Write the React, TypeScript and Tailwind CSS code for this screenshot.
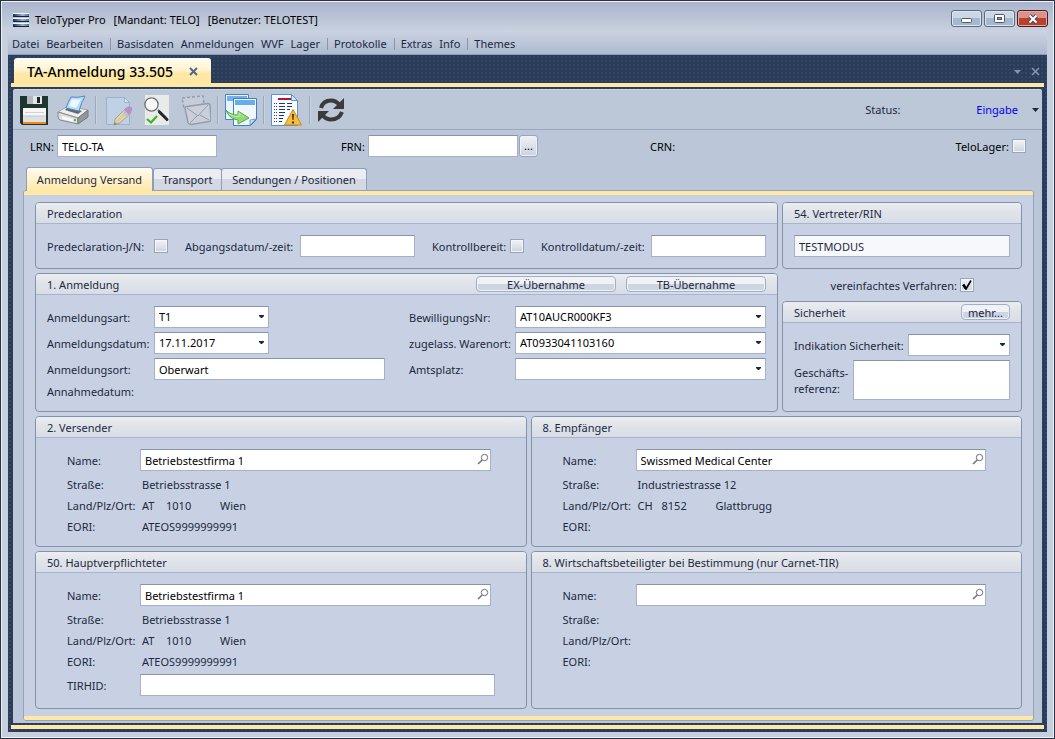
import type { ReactNode } from "react";
import clsx from "clsx";

type Party = {
  title: string;
  id: string;
  name: string;
  street?: string;
  country?: string;
  zip?: string;
  city?: string;
  eori?: string;
  tirhid?: boolean;
};

const parties: Party[] = [
  {
    title: "2. Versender",
    id: "versender",
    name: "Betriebstestfirma 1",
    street: "Betriebsstrasse 1",
    country: "AT",
    zip: "1010",
    city: "Wien",
    eori: "ATEOS9999999991",
  },
  {
    title: "8. Empfänger",
    id: "empfaenger",
    name: "Swissmed Medical Center",
    street: "Industriestrasse 12",
    country: "CH",
    zip: "8152",
    city: "Glattbrugg",
  },
  {
    title: "50. Hauptverpflichteter",
    id: "hauptverpflichteter",
    name: "Betriebstestfirma 1",
    street: "Betriebsstrasse 1",
    country: "AT",
    zip: "1010",
    city: "Wien",
    eori: "ATEOS9999999991",
    tirhid: true,
  },
  {
    title: "8. Wirtschaftsbeteiligter bei Bestimmung (nur Carnet-TIR)",
    id: "wirtschaftsbeteiligter",
    name: "",
  },
];

const menu = [
  ["Datei", "Bearbeiten"],
  ["Basisdaten", "Anmeldungen", "WVF", "Lager"],
  ["Protokolle"],
  ["Extras", "Info"],
  ["Themes"],
];

const field =
  "h-[22px] min-w-0 rounded-none border border-[#a5b1c8] border-t-[#8593ab] bg-white px-1 text-black outline-none focus:border-[#e5c365]";

function TextInput({ id, value = "", className }: { id: string; value?: string; className?: string }) {
  return <input id={id} type="text" defaultValue={value} className={clsx(field, className)} />;
}

function Arrow({ className }: { className?: string }) {
  return (
    <svg viewBox="0 0 7 4" className={clsx("h-1 w-[7px]", className)} fill="currentColor">
      <path d="M0 0h7L3.5 4z" />
    </svg>
  );
}

function Combo({ id, value = "", className }: { id: string; value?: string; className?: string }) {
  return (
    <div className={clsx("relative flex", className)}>
      <select id={id} defaultValue={value} className={clsx(field, "w-full appearance-none")}>
        <option value={value}>{value}</option>
      </select>
      <svg
        viewBox="0 0 5 3"
        className="pointer-events-none absolute top-[9px] right-[5px] h-[3px] w-[5px]"
        fill="#1b293e"
      >
        <path d="M0 0h5v1L3 3H2L0 1z" />
      </svg>
    </div>
  );
}

function Check({ id, checked = false }: { id: string; checked?: boolean }) {
  return (
    <span className="relative flex size-3.5 shrink-0">
      <input
        id={id}
        type="checkbox"
        defaultChecked={checked}
        className="peer size-3.5 appearance-none border border-[#97a5bf] bg-linear-to-b from-[#f3f4f7] to-[#cdd2df] shadow-[inset_0_0_0_1px_#f4f6fa]"
      />
      <svg
        viewBox="0 0 14 14"
        className="pointer-events-none absolute inset-0 hidden peer-checked:block"
        fill="none"
        stroke="#000"
      >
        <path d="M3 7l3 4L11 2.500" strokeWidth="1.600" />
        <path d="M3.200 6.600l2.600 3.600" strokeWidth="2.600" />
      </svg>
    </span>
  );
}

function Label({ htmlFor, className, children }: { htmlFor: string; className?: string; children: ReactNode }) {
  return (
    <label htmlFor={htmlFor} className={clsx("shrink-0 pt-0.5 whitespace-nowrap", className)}>
      {children}
    </label>
  );
}

function SmallButton({ className, children }: { className?: string; children: ReactNode }) {
  return (
    <button
      type="button"
      className={clsx(
        "flex h-4 items-center justify-center rounded-sm border border-[#a3afc8] bg-linear-to-b from-[#f0f2f6] from-50% to-[#cfd4e1] to-50% pt-px shadow-[inset_0_0_0_1px_#eef1f6]",
        className,
      )}
    >
      {children}
    </button>
  );
}

function Group({
  title,
  actions,
  className,
  children,
}: {
  title: string;
  actions?: ReactNode;
  className?: string;
  children: ReactNode;
}) {
  return (
    <section className={clsx("rounded border border-[#8492a8]", className)}>
      <header className="flex h-[21px] items-center justify-between rounded-t-[3px] border-b border-[#a7b4cb] bg-linear-to-b from-[#eaeef0] via-[#dfe3e9] to-[#d8dce6] px-[11px]">
        <h2 className="pt-0.5">{title}</h2>
        {actions}
      </header>
      {children}
    </section>
  );
}

function PartyGroup({ party }: { party: Party }) {
  const { title, id, name, street, country, zip, city, eori, tirhid } = party;
  return (
    <Group title={title}>
      <div className="pt-[11px] pr-[35px] pb-[9px] pl-[31px]">
        <div className="mb-[3px] flex items-center">
          <Label htmlFor={`${id}-name`} className="w-[73px]">
            Name:
          </Label>
          <div className="relative flex flex-1">
            <TextInput id={`${id}-name`} value={name} className="w-full pr-5" />
            <button type="button" aria-label="Suchen" className="absolute top-1 right-[2px]">
              <svg viewBox="0 0 12 12" className="size-3" fill="none" stroke="#6b7078">
                <circle cx="7.500" cy="4.500" r="3.200" />
                <path d="M5.200 7L1 11" strokeWidth="1.500" />
              </svg>
            </button>
          </div>
        </div>
        <dl className="grid grid-cols-[75px_1fr] leading-[21px] whitespace-nowrap">
          <dt>Straße:</dt>
          <dd>{street}</dd>
          <dt>Land/Plz/Ort:</dt>
          <dd className="flex">
            <span className="w-6">{country}</span>
            <span className="w-[54px]">{zip}</span>
            <span>{city}</span>
          </dd>
          <dt>EORI:</dt>
          <dd>{eori}</dd>
        </dl>
        {tirhid && (
          <div className="-mr-1 mt-0.5 mb-[3px] flex items-center">
            <Label htmlFor={`${id}-tirhid`} className="w-[73px]">
              TIRHID:
            </Label>
            <TextInput id={`${id}-tirhid`} className="flex-1" />
          </div>
        )}
      </div>
    </Group>
  );
}

function SaveIcon() {
  return (
    <svg viewBox="0 0 32 32" className="size-8">
      <path d="M1 2h28v29H3l-2-2z" fill="#203431" />
      <path d="M8 2h15v8H8z" fill="#e4e5e7" />
      <path d="M8 2h6v8H8z" fill="#b5b9bd" />
      <path d="M18 3h3v6h-3z" fill="#1b2426" />
      <path d="M4 14h23v14H4z" fill="#f6f6f6" />
      <path d="M4 21h23v7H4z" fill="#dedfe1" />
      <path d="M6 18.500h19M6 22.500h19" stroke="#cfd1d3" />
      <path d="M4 28h23v2H4z" fill="#f08a1d" />
    </svg>
  );
}

function PrintIcon() {
  return (
    <svg viewBox="0 0 32 32" className="size-8" strokeLinejoin="round">
      <path d="M1 18l10-6 20 4-10 8z" fill="#eeeeee" stroke="#a2a7a9" />
      <path d="M1 18l20 6v6L3 26q-2-1-2-3z" fill="#dcdddd" stroke="#85898b" />
      <path d="M21 24l10-8v7l-10 7z" fill="#94989a" stroke="#74797b" />
      <path d="M8 16l13 4 4-3-14-4z" fill="#64696c" />
      <path d="M14 3q7 1 14-1-4 7-6 15L9 14q2-6 5-11z" fill="#b9dcf7" stroke="#4f8cc4" />
      <path d="M15 5q5 1 9 0l-5 9-7-2z" fill="#edf7ff" />
      <path d="M5 22l11 3v3L5 25z" fill="#f9f9f9" />
      <path d="M17 25h2v2h-2z" fill="#4fc224" />
    </svg>
  );
}

function EditIcon() {
  return (
    <svg viewBox="0 0 32 32" className="size-8 opacity-60">
      <path d="M3.500 3.500h18l5 5v22h-23z" fill="#c4d8f0" stroke="#83a6d0" />
      <path d="M21.500 3.500v5h5z" fill="#edf4fb" stroke="#83a6d0" />
      <path d="M11 31l1-6 11-11 5 5-11 10z" fill="#edd579" stroke="#a88e50" />
      <path d="M13 26L24 15M16 28l10-10" stroke="#f9edbd" />
      <path d="M21 16l3-3q3-2 5 1 1 2-1 4l-2 3z" fill="#b06fc0" />
      <path d="M19 18l2-2 5 5-2 2z" fill="#b9bfca" />
      <path d="M11 31l.500-3 2.500 2z" fill="#555" />
    </svg>
  );
}

function CheckDocIcon() {
  return (
    <svg viewBox="0 0 32 32" className="size-8" fill="none">
      <path d="M4 1h24v30H4z" fill="#e9ebea" />
      <path d="M17 16l8 8" stroke="#4a4e50" strokeWidth="2" />
      <path d="M18.500 18l7.500 7.500" stroke="#25292b" strokeWidth="3" strokeLinecap="round" />
      <circle cx="10.500" cy="10.500" r="6.600" fill="#f6f8f8" stroke="#6c7072" strokeWidth="1.300" />
      <path d="M6 9q2-4 6-3" stroke="#fff" strokeWidth="2" />
      <path d="M6 25l4 3.500 6-6.500" stroke="#3cb51b" strokeWidth="2.200" />
    </svg>
  );
}

function MailIcon() {
  return (
    <svg viewBox="0 0 32 32" className="size-8" fill="none" stroke="#949dab">
      <path d="M3 4l21-2 1 8-15 3-5 1z" fill="#c6cdd8" strokeWidth="1.500" strokeDasharray="3 2" />
      <path
        d="M8 12.500l21-3q2 0 2 2l1 14q0 2-2 2l-18 3q-2 0-3-2L6 14.500q0-2 2-2z"
        fill="#c9d0da"
        strokeWidth="1.500"
      />
      <path d="M8 14l11 8 10-11M11 29l7-7M30 26l-9-5" />
    </svg>
  );
}

function WindowsIcon() {
  return (
    <svg viewBox="0 0 32 32" className="size-8">
      <path d="M.500.500h23v25H.500z" fill="#e9f4ff" stroke="#4383c6" />
      <path d="M2 2h20v5H2z" fill="#72b2ec" />
      <path d="M8.500 4.500h23v21l-6 6h-17z" fill="#f1f7ff" stroke="#3f7ec1" />
      <path d="M10 6h20v5H10z" fill="#69acec" />
      <path d="M25 31v-5l6-1z" fill="#cfe2f5" stroke="#3f7ec1" strokeWidth=".7" />
      <path
        d="M1 16q4 5 12 5v-4l11 7-11 6v-4Q4 25 1 16z"
        fill="#93d873"
        stroke="#55ad4c"
        strokeLinejoin="round"
      />
      <path d="M4 20q4 3 10 2.500V19l5 4" fill="none" stroke="#c6efae" />
    </svg>
  );
}

function ReportIcon() {
  return (
    <svg viewBox="0 0 32 32" className="size-8">
      <path d="M.500.500h20l6 6v25H.500z" fill="#f8fbff" stroke="#5b93cd" />
      <path d="M20.500.500v6h6z" fill="#d8e7f7" stroke="#5b93cd" />
      <path d="M7 4h13v2H7z" fill="#b8132b" />
      <path d="M3 9.500h3M3 12.500h3M3 15.500h3M3 18.500h3M3 21.500h3M3 24.500h3M3 27.500h3" stroke="#263f82" strokeDasharray="1 1" />
      <path d="M8 9.500h6M16 9.500h5M8 12.500h6M16 12.500h5M8 15.500h6M16 15.500h3M8 18.500h6M8 21.500h5M8 24.500h4M8 27.500h3" stroke="#20366f" />
      <path d="M22 15.500L30.500 31h-17z" fill="#f5bd3a" stroke="#c98b1c" strokeLinejoin="round" />
      <path d="M21 20h2l-.5 6h-1zM21 27.500h2v2h-2z" fill="#4c2b10" />
    </svg>
  );
}

function RefreshIcon() {
  return (
    <svg viewBox="0 0 32 32" className="size-8" fill="none" stroke="#3b3b3b" strokeWidth="4">
      <path d="M4 14Q6 6.500 14 6.500q5 0 8.500 4.500" />
      <path d="M25 18q-3 7.500-11 7.500-5 0-8.500-4.500" />
      <path d="M27 4v11H16z" fill="#3b3b3b" stroke="none" />
      <path d="M1 28V17h11z" fill="#3b3b3b" stroke="none" />
    </svg>
  );
}

const tools = [
  [
    { label: "Speichern", icon: <SaveIcon /> },
    { label: "Drucken", icon: <PrintIcon /> },
  ],
  [
    { label: "Bearbeiten", icon: <EditIcon /> },
    { label: "Prüfen", icon: <CheckDocIcon /> },
    { label: "Senden", icon: <MailIcon /> },
  ],
  [{ label: "Kopieren", icon: <WindowsIcon /> }],
  [{ label: "Fehlerbericht", icon: <ReportIcon /> }],
  [{ label: "Aktualisieren", icon: <RefreshIcon /> }],
];

function TitleBar() {
  const button =
    "flex h-[17px] w-[31px] items-center justify-center rounded-[3px] border border-[#5c6a80] bg-linear-to-b from-[#c9d7e6] from-50% to-[#a5b8cf] to-50% shadow-[inset_0_0_0_1px_#dce6f0]";
  return (
    <div className="flex h-[29px] items-start justify-between bg-linear-to-b from-[#aab5cd] to-[#c9d1de] pr-[5px] pl-[11px]">
      <div className="flex items-center gap-1.5 pt-[9px]">
        <svg viewBox="0 0 16 14" className="h-3.5 w-4">
          <defs>
            <linearGradient id="stripe" gradientUnits="userSpaceOnUse" x1="0" y1="0" x2="16" y2="0">
              <stop offset="0" stopColor="#10315f" />
              <stop offset=".6" stopColor="#9fb4d0" />
              <stop offset="1" stopColor="#5b7090" />
            </linearGradient>
          </defs>
          <path d="M0 0h16v3H0zM0 5h16v4H0zM0 10h16v4H0z" fill="#f2f6fa" />
          <path d="M0 1h16v2H0zM0 6h16v2H0zM0 11h16v2H0z" fill="url(#stripe)" />
          <path d="M0 3h16v1H0zM0 8h16v1H0zM0 13h16v1H0z" fill="#12233f" />
        </svg>
        <h1 className="flex gap-2 pt-px text-black">
          <span>TeloTyper Pro</span>
          <span>[Mandant: TELO]</span>
          <span>[Benutzer: TELOTEST]</span>
        </h1>
      </div>
      <div className="flex gap-0.5 pt-2">
        <button type="button" aria-label="Minimieren" className={button}>
          <svg viewBox="0 0 11 5" className="mt-1 h-[5px] w-[11px]">
            <rect x=".500" y=".500" width="10" height="4" rx="1" fill="#fff" stroke="#4c566a" />
          </svg>
        </button>
        <button type="button" aria-label="Maximieren" className={button}>
          <svg viewBox="0 0 11 9" className="h-[9px] w-[11px]" stroke="#4c566a">
            <rect x=".500" y=".500" width="10" height="8" rx="1" fill="#fff" />
            <rect x="3.500" y="3.500" width="4" height="2" fill="#8ba2c0" />
          </svg>
        </button>
        <button
          type="button"
          aria-label="Schließen"
          className="flex h-[17px] w-[31px] items-center justify-center rounded-[3px] border border-[#4b1b22] bg-linear-to-b from-[#dd9289] from-50% to-[#b8402d] to-50% shadow-[inset_0_0_0_1px_#e5aaa1]"
        >
          <svg viewBox="0 0 12 10" className="h-2.5 w-3" fill="none">
            <path d="M2.500 1.500l7 7M9.500 1.500l-7 7" stroke="#4c4a59" strokeWidth="4" />
            <path d="M2.500 1.500l7 7M9.500 1.500l-7 7" stroke="#fff" strokeWidth="2" />
          </svg>
        </button>
      </div>
    </div>
  );
}

function MenuBar() {
  return (
    <nav className="mx-1.5 flex h-6 items-center border-b border-[#8f9db8] bg-linear-to-b from-[#cad3e2] to-[#aebad0] pt-0.5 pl-1">
      {menu.map((items, i) => (
        <div key={items[0]} className="flex items-center">
          {i > 0 && <span className="mr-1.5 ml-[7px] h-3 w-px bg-[#8895ad]" />}
          <ul className="flex gap-[7px]">
            {items.map((item) => (
              <li key={item}>
                <a href="#">{item}</a>
              </li>
            ))}
          </ul>
        </div>
      ))}
    </nav>
  );
}

function Toolbar() {
  return (
    <div className="flex h-[41px] items-center rounded-t-[3px] border-t border-b border-t-[#cdd5e3] border-b-[#9aa8be] bg-[#bcc7d8] pr-[3px] pl-1.5">
      <div className="flex items-center gap-1.5">
        {tools.map((group, i) => (
          <div key={i} className="flex items-center gap-1.5">
            {i > 0 && <span className="h-7 w-0.5 border-r border-[#c9d2e0] bg-[#9ba9bf]" />}
            {group.map((tool) => (
              <button key={tool.label} type="button" aria-label={tool.label}>
                {tool.icon}
              </button>
            ))}
          </div>
        ))}
      </div>
      <div className="ml-auto flex items-center">
        <span className="w-[111px]">Status:</span>
        <button type="button" className="flex items-center justify-between gap-3.5 text-[#0000f0]">
          Eingabe
          <Arrow className="text-[#1b293e]" />
        </button>
      </div>
    </div>
  );
}

function HeaderFields() {
  return (
    <div className="flex items-center pt-[5px] pr-4 pl-[17px] text-black">
      <div className="flex w-[311px] items-center">
        <Label htmlFor="lrn" className="w-[27px]">
          LRN:
        </Label>
        <TextInput id="lrn" value="TELO-TA" className="w-40" />
      </div>
      <div className="flex w-[309px] items-center">
        <Label htmlFor="frn" className="w-[27px]">
          FRN:
        </Label>
        <TextInput id="frn" className="mr-px w-[150px]" />
        <button
          type="button"
          className="h-[22px] w-[19px] rounded-[3px] border border-[#97a5bf] bg-linear-to-b from-[#f0f2f6] to-[#cbd1df] shadow-[inset_0_0_0_1px_#eef1f6]"
        >
          ...
        </button>
      </div>
      <span className="pt-0.5">CRN:</span>
      <div className="ml-auto flex items-center gap-[3px]">
        <Label htmlFor="telolager">TeloLager:</Label>
        <Check id="telolager" />
      </div>
    </div>
  );
}

function Tabs() {
  const tab =
    "h-[22px] rounded-t-[3px] border border-b-0 border-[#8f9eb8] bg-linear-to-b from-[#eaedf1] from-50% to-[#d3d8e2] to-50% px-[7px]";
  return (
    <div role="tablist" className="mt-[10px] flex items-end pl-[13px]">
      <button
        type="button"
        role="tab"
        aria-selected="true"
        className="z-10 -mb-px h-6 w-[127px] rounded-t-[3px] border border-b-0 border-[#8f9eb8] bg-linear-to-b from-[#fffbef] via-[#fff3cd] via-50% to-[#ffe8a6]"
      >
        Anmeldung Versand
      </button>
      <button type="button" role="tab" aria-selected="false" className={clsx(tab, "w-[69px]")}>
        Transport
      </button>
      <button type="button" role="tab" aria-selected="false" className={clsx(tab, "-ml-px w-[146px]")}>
        Sendungen / Positionen
      </button>
    </div>
  );
}

export default function App() {
  return (
    <div className="flex min-h-screen flex-col border border-[#2b3040] border-b-2 bg-[#c6cfdd] font-['Noto_Sans','Segoe_UI',sans-serif] text-[11px] leading-4 text-[#1b293e] shadow-[inset_0_0_0_1px_#eef1f6]">
      <div className="mx-px mt-px">
        <TitleBar />
        <MenuBar />
      </div>
      <div className="mx-[7px] mb-1.5 flex flex-1 flex-col bg-[#2b3c59] bg-[radial-gradient(#34466a_25%,transparent_30%)] bg-size-[4px_4px] pb-[3px]">
        <div className="mx-[3px] flex h-8 items-end justify-between border-b-4 border-[#ffe8a6] pr-1 pl-[3px]">
          <div className="flex h-[25px] items-center gap-4 rounded-t-[3px] bg-linear-to-b from-[#fffcf2] from-0% via-[#fff3cf] via-50% to-[#ffe8a6] to-60% px-[13px] pt-0.5 text-[14px] font-medium text-black">
            TA-Anmeldung 33.505
            <button type="button" aria-label="Tab schließen">
              <svg viewBox="0 0 9 9" className="size-[9px]" stroke="#52688b" strokeWidth="2">
                <path d="M1 1l7 7M8 1L1 8" />
              </svg>
            </button>
          </div>
          <div className="mb-[7px] flex items-center gap-2.5 text-[#8593ae]">
            <button type="button" aria-label="Fensterliste">
              <Arrow />
            </button>
            <button type="button" aria-label="Fenster schließen">
              <svg viewBox="0 0 9 9" className="size-[9px]" stroke="currentColor" strokeWidth="1.600">
                <path d="M1 1l7 7M8 1L1 8" />
              </svg>
            </button>
          </div>
        </div>

        <main className="mx-[5px] mt-0.5 flex flex-1 flex-col rounded-t-[3px] bg-[#bbc7d8] pb-0.5">
          <Toolbar />
          <HeaderFields />
          <Tabs />
          <div className="mr-2 ml-2.5 flex-1 rounded-[3px] border border-[#95a4ba] bg-[#c8d1e3]">
            <div className="h-full rounded-[2px] border-y-4 border-[#ffe8a6] px-[11px] pt-[7px] pb-[7px]">
              <div className="flex gap-1">
                <div className="flex min-w-0 flex-1 flex-col gap-1">
                  <Group title="Predeclaration">
                    <div className="flex items-center gap-[17px] p-[11px]">
                      <div className="flex items-center">
                        <Label htmlFor="predeclaration" className="w-[107px]">
                          Predeclaration-J/N:
                        </Label>
                        <Check id="predeclaration" />
                      </div>
                      <div className="flex items-center">
                        <Label htmlFor="abgang" className="w-[115px]">
                          Abgangsdatum/-zeit:
                        </Label>
                        <TextInput id="abgang" className="w-[115px]" />
                      </div>
                      <div className="flex items-center">
                        <Label htmlFor="kontrollbereit" className="w-[78px]">
                          Kontrollbereit:
                        </Label>
                        <Check id="kontrollbereit" />
                      </div>
                      <div className="flex min-w-0 flex-1 items-center">
                        <Label htmlFor="kontrolldatum" className="w-[110px]">
                          Kontrolldatum/-zeit:
                        </Label>
                        <TextInput id="kontrolldatum" className="flex-1" />
                      </div>
                    </div>
                  </Group>

                  <Group
                    title="1. Anmeldung"
                    actions={
                      <div className="flex gap-2.5">
                        <SmallButton className="w-[140px]">EX-Übernahme</SmallButton>
                        <SmallButton className="w-[140px]">TB-Übernahme</SmallButton>
                      </div>
                    }
                  >
                    <div className="flex gap-6 p-[11px]">
                      <div className="flex w-[338px] flex-col gap-1">
                        <div className="flex items-center">
                          <Label htmlFor="art" className="w-[107px]">
                            Anmeldungsart:
                          </Label>
                          <Combo id="art" value="T1" className="w-[115px]" />
                        </div>
                        <div className="flex items-center">
                          <Label htmlFor="datum" className="w-[107px]">
                            Anmeldungsdatum:
                          </Label>
                          <Combo id="datum" value="17.11.2017" className="w-[115px]" />
                        </div>
                        <div className="flex items-center">
                          <Label htmlFor="ort" className="w-[107px]">
                            Anmeldungsort:
                          </Label>
                          <TextInput id="ort" value="Oberwart" className="flex-1" />
                        </div>
                        <span>Annahmedatum:</span>
                      </div>
                      <div className="flex flex-1 flex-col gap-1">
                        <div className="flex items-center">
                          <Label htmlFor="bewilligung" className="w-[106px]">
                            BewilligungsNr:
                          </Label>
                          <Combo id="bewilligung" value="AT10AUCR000KF3" className="flex-1" />
                        </div>
                        <div className="flex items-center">
                          <Label htmlFor="warenort" className="w-[106px]">
                            zugelass. Warenort:
                          </Label>
                          <Combo id="warenort" value="AT0933041103160" className="flex-1" />
                        </div>
                        <div className="flex items-center">
                          <Label htmlFor="amtsplatz" className="w-[106px]">
                            Amtsplatz:
                          </Label>
                          <Combo id="amtsplatz" className="flex-1" />
                        </div>
                      </div>
                    </div>
                  </Group>
                </div>

                <div className="w-60">
                  <Group title="54. Vertreter/RIN">
                    <div className="flex p-[11px]">
                      <input
                        aria-label="54. Vertreter/RIN"
                        readOnly
                        value="TESTMODUS"
                        className="h-[22px] w-full border border-[#a5b1c8] border-t-[#8593ab] bg-[#f6f8fc] px-1"
                      />
                    </div>
                  </Group>
                  <div className="flex h-8 items-center justify-end gap-[3px] pr-12">
                    <Label htmlFor="vereinfacht">vereinfachtes Verfahren:</Label>
                    <Check id="vereinfacht" checked />
                  </div>
                  <Group title="Sicherheit" actions={<SmallButton className="w-[49px]">mehr...</SmallButton>}>
                    <div className="flex flex-col gap-1 p-[11px]">
                      <div className="flex items-center">
                        <Label htmlFor="indikation" className="w-[114px]">
                          Indikation Sicherheit:
                        </Label>
                        <Combo id="indikation" className="flex-1" />
                      </div>
                      <div className="flex items-center">
                        <Label htmlFor="referenz" className="w-[59px]">
                          Geschäfts-
                          <br />
                          referenz:
                        </Label>
                        <textarea
                          id="referenz"
                          className="h-10 min-w-0 flex-1 resize-none border border-[#a5b1c8] border-t-[#8593ab] bg-white px-1 outline-none"
                        />
                      </div>
                    </div>
                  </Group>
                </div>
              </div>

              <div className="mt-1 grid grid-cols-2 gap-1">
                {parties.map((party) => (
                  <PartyGroup key={party.id} party={party} />
                ))}
              </div>
            </div>
          </div>
        </main>
        <div className="mx-[3px] mt-0.5 h-1 bg-[#ffe8a6]" />
      </div>
    </div>
  );
}
